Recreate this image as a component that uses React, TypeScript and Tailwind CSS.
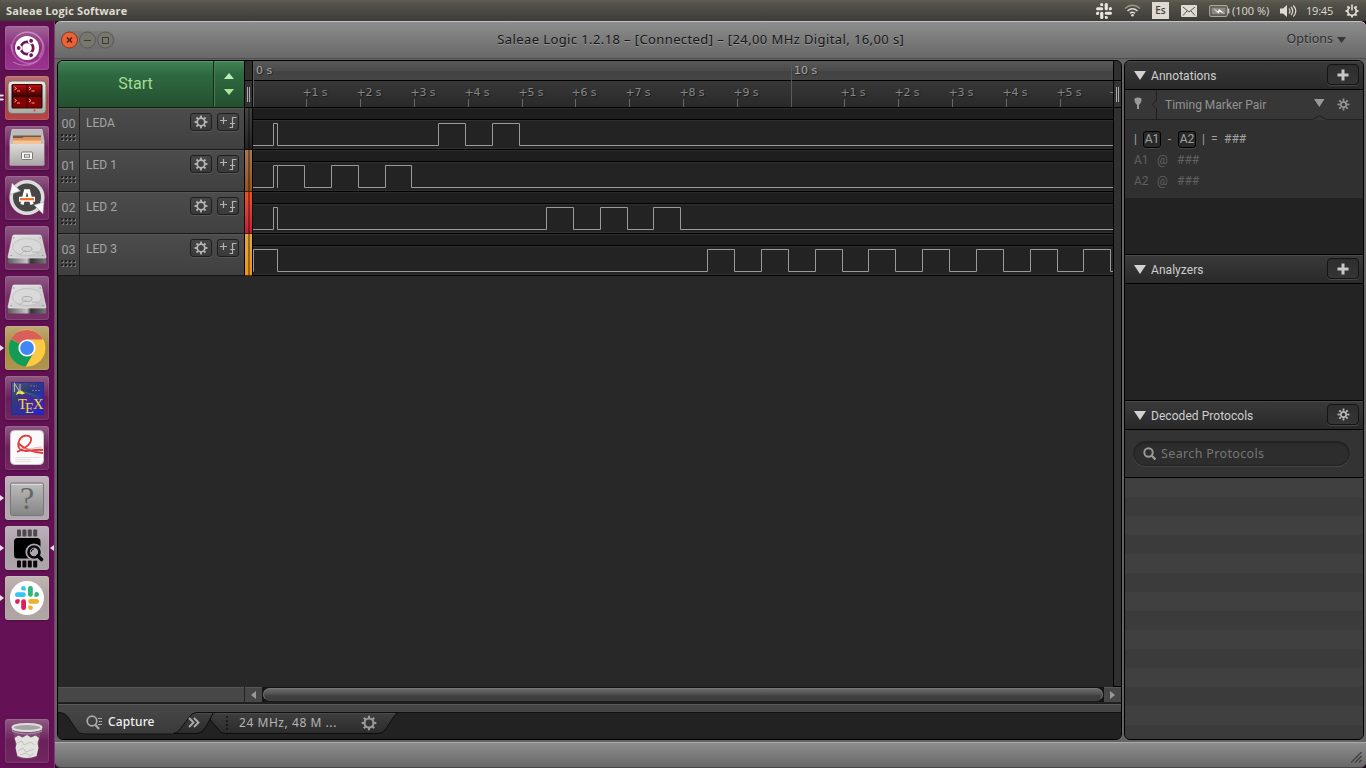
import React from "react";

type Pulse = [number, number];

const UI = "font-['Roboto',sans-serif]";
const LU = "font-['Noto_Sans',sans-serif]";

const channels: { id: string; name: string; strip: string; pulses: Pulse[] }[] = [
  { id: "00", name: "LEDA", strip: "from-[#434343] to-[#242424]", pulses: [[20, 24], [185, 212], [239, 266]] },
  { id: "01", name: "LED 1", strip: "from-[#a87850] to-[#9a5218]", pulses: [[20, 24], [24, 51], [78, 105], [132, 158]] },
  { id: "02", name: "LED 2", strip: "from-[#f1521f] to-[#c8183c]", pulses: [[20, 24], [293, 320], [347, 374], [400, 427]] },
  {
    id: "03",
    name: "LED 3",
    strip: "from-[#e0a83c] to-[#f29410]",
    pulses: [[0, 24], [454, 481], [508, 535], [562, 589], [615, 642], [669, 696], [723, 750], [777, 804], [830, 857]],
  },
];

const wave = (pulses: Pulse[]) =>
  "M0 37.5" + pulses.map(([a, b]) => `H${a + 0.5}V15.5H${b + 0.5}V37.5`).join("") + "H861";

const minor = [53, 107, 161, 215, 269, 322, 376, 430, 484, 591, 645, 699, 753, 807];

function Gear({ size = 14, color = "#b4b4b4", hole = 3.2, teeth = 1.9 }: { size?: number; color?: string; hole?: number; teeth?: number }) {
  return (
    <svg width={size} height={size} viewBox="0 0 14 14" className="shrink-0">
      <circle cx="7" cy="7" r={hole + 0.9} fill="none" stroke={color} strokeWidth="1.8" />
      {[0, 45, 90, 135, 180, 225, 270, 315].map((a) => (
        <rect key={a} x={7 - teeth / 2} y="0.6" width={teeth} height="2.4" fill={color} transform={`rotate(${a} 7 7)`} />
      ))}
    </svg>
  );
}

function UbuntuIcon() {
  return (
    <svg width="44" height="44" viewBox="0 0 44 44">
      <g fill="none" stroke="#e6b5dc" strokeOpacity=".4" strokeWidth="1.4">
        <path d="M8 26C3 10 22 0 33 10c8 8 4 17 1 21" />
        <path d="M12 10c12-10 31 2 26 17C34 38 20 43 8 36" />
        <path d="M6 18c0 14 14 24 26 17" />
      </g>
      <circle cx="22" cy="22" r="12" fill="#fff" />
      <circle cx="22" cy="22" r="6.2" fill="none" stroke="#6b1a5b" strokeWidth="2.8" />
      {[180, 300, 60].map((a) => (
        <g key={a} transform={`rotate(${a} 22 22)`}>
          <circle cx="30" cy="22" r="3" fill="#fff" />
          <circle cx="30.3" cy="22" r="1.9" fill="#6b1a5b" />
        </g>
      ))}
    </svg>
  );
}

function TerminatorIcon() {
  return (
    <svg width="44" height="44" viewBox="0 0 44 44">
      <defs>
        <linearGradient id="tm" x2="0" y2="1"><stop stopColor="#ecebe6" /><stop offset="1" stopColor="#aaa9a2" /></linearGradient>
        <linearGradient id="tr" x2="0" y2="1"><stop stopColor="#c30b0b" /><stop offset="1" stopColor="#4a0000" /></linearGradient>
      </defs>
      <rect x="3" y="5" width="38" height="32.5" rx="4" fill="url(#tm)" stroke="#77736e" />
      <rect x="6.5" y="8" width="31" height="24.5" rx="1.5" fill="#240c0c" />
      {[0, 1, 2, 3].map((i) => {
        const x = 8 + (i % 2) * 14.5, y = 9 + Math.floor(i / 2) * 12;
        return (
          <g key={i}>
            <rect x={x} y={y} width="13.5" height="10.500" fill={i < 2 ? "url(#tr)" : "#850000"} />
            <path d={`M${x + 1.5} ${y + 2}l2 1.5-2 1.5M${x + 4} ${y + 6}h3`} fill="none" stroke="#f5bcbc" strokeWidth=".9" />
          </g>
        );
      })}
      <circle cx="29.5" cy="34.5" r="1" fill="#f33" />
    </svg>
  );
}

function FilesIcon() {
  return (
    <svg width="44" height="44" viewBox="0 0 44 44">
      <defs>
        <linearGradient id="fg" x2="0" y2="1"><stop stopColor="#dddcda" /><stop offset="1" stopColor="#a8a7a6" /></linearGradient>
      </defs>
      <path d="M7 3.500h30l2 11.500v24H5V15z" fill="#bdbcba" stroke="#d9d8d6" strokeWidth=".7" />
      <path d="M8 9.500h28v9H8z" fill="#6b5a50" />
      <path d="M8 12h9l2-1h17v8H8z" fill="#e0945c" />
      <path d="M8 14.500h28v4H8z" fill="#f5c496" />
      <path d="M5 18h34v20.5q0 1-1 1H6q-1 0-1-1z" fill="url(#fg)" />
      <rect x="16.5" y="26" width="11" height="7.5" rx="1" fill="#f6f6f6" stroke="#777" />
      <rect x="19.5" y="28.7" width="5" height="2.5" fill="none" stroke="#777" />
    </svg>
  );
}

function UpdaterIcon() {
  return (
    <svg width="44" height="44" viewBox="0 0 44 44">
      <circle cx="22" cy="21.5" r="15.8" fill="#464646" stroke="#dcdcdc" strokeWidth="3.600" />
      <path d="M5 18.500L7 7l8.500 8zM39 26l-1 12-9-9z" fill="#f6f6f6" stroke="#999" strokeWidth=".5" />
      <path d="M17 28.500l3.500-13.500h3L27 28.500" fill="none" stroke="#fff" strokeWidth="3.300" />
      <path d="M14 23.200h16" stroke="#fff" strokeWidth="5" />
      <path d="M15 23.200h14" stroke="#f06a22" strokeWidth="2.200" />
    </svg>
  );
}

function DiskIcon() {
  return (
    <svg width="44" height="44" viewBox="0 0 44 44">
      <defs>
        <linearGradient id="dg" x2="1" y2="1"><stop stopColor="#e4e4e4" /><stop offset="1" stopColor="#c2c2c2" /></linearGradient>
        <linearGradient id="dk"><stop stopColor="#5c5c5c" /><stop offset=".5" stopColor="#c5c5c5" /><stop offset=".6" stopColor="#333" /><stop offset="1" stopColor="#777" /></linearGradient>
      </defs>
      <path d="M3 31h38v5.500q0 1-1 1H4q-1 0-1-1z" fill="url(#dk)" />
      <path d="M9 9h26q1 0 1.300 1L41 31q0 1-1 1H4q-1 0-1-1L7.700 10q.3-1 1.300-1z" fill="url(#dg)" stroke="#f3f3f3" strokeWidth=".6" />
      <ellipse cx="22" cy="21" rx="14.500" ry="8.500" fill="#d9d9d9" stroke="#bcbcbc" strokeWidth=".8" />
      <ellipse cx="22" cy="23" rx="5" ry="2.600" fill="#d4d4d4" stroke="#a2a2a2" strokeWidth=".8" />
      <path d="M14 29l7-5M27 26h7" stroke="#b2b2b2" strokeWidth=".9" />
      <path d="M8 12h1.500M34.500 12h1.500M5.500 29.500h1.500M37 29.500h1.500" stroke="#999" />
    </svg>
  );
}

function ChromeIcon() {
  return (
    <svg width="44" height="44" viewBox="0 0 44 44">
      <circle cx="22" cy="22" r="18.500" fill="#fcc934" />
      <path d="M22 22L6 12.700A18.500 18.500 0 0 1 38 13.500z" fill="#d9605a" />
      <path d="M5.900 12.900A18.500 18.500 0 0 0 21 40.500l7.500-13.700L22 22z" fill="#149c57" />
      <path d="M22 13.500h16A18.500 18.500 0 0 1 21 40.500l8.500-14.500z" fill="#fcc944" />
      <circle cx="22" cy="22" r="8.600" fill="#fff" />
      <circle cx="22" cy="22" r="6.900" fill="#4285f4" />
    </svg>
  );
}

function TexIcon() {
  return (
    <svg width="44" height="44" viewBox="0 0 44 44">
      <defs>
        <linearGradient id="tx" x2=".8" y2="1"><stop stopColor="#56606a" /><stop offset=".4" stopColor="#303978" /><stop offset="1" stopColor="#2525d0" /></linearGradient>
        <linearGradient id="beam"><stop stopColor="#b8d820" /><stop offset=".3" stopColor="#247a50" /><stop offset="1" stopColor="#2a2ac0" /></linearGradient>
      </defs>
      <rect x="6.500" y="6.500" width="32" height="32" fill="url(#tx)" stroke="#2a2a9d" />
      <path d="M13 20l9-3 16 6v10l-24 2z" fill="#5425a3" opacity=".6" />
      <path d="M16 15l22 5v5z" fill="url(#beam)" opacity=".8" />
      <path d="M11 19q1-5 5-4.500l4 3-3 1-3-1z" fill="#f0f030" />
      <path d="M9.500 16V7.500L15 16V8" fill="none" stroke="#b0b4b8" strokeWidth="1.100" />
      <path d="M25 10h7M27 14.500h8" fill="none" stroke="#7b85a4" strokeWidth=".8" strokeDasharray="2 1" />
      <g fill="#f4de21" className="font-['Liberation_Serif',serif]" fontSize="14.500">
        <text x="13" y="33">T</text><text x="20" y="37">E</text><text x="28" y="33">X</text>
      </g>
    </svg>
  );
}

function PdfIcon() {
  return (
    <svg width="44" height="44" viewBox="0 0 44 44">
      <rect x="5.500" y="4.500" width="33" height="34" rx="4" fill="#fafafa" stroke="#c9c5c9" />
      <path d="M38 24c-7-1-12 1-17 1-7 0-9-5-7-10 2-6 10-7 12-3 1 5-5 10-14 14M13 17c5 5 12 9 25 10" fill="none" stroke="#dd3c3c" strokeWidth="1.800" />
      <path d="M15 22c8 3 15-1 22-1" stroke="#f3b3b3" fill="none" />
      <path d="M10.500 31.500h24M10.500 33.500h15M10.500 35.500h15" stroke="#e0e0e0" />
    </svg>
  );
}

function UnknownIcon() {
  return (
    <svg width="44" height="44" viewBox="0 0 44 44">
      <defs><linearGradient id="qg" x2="0" y2="1"><stop stopColor="#bdbdbd" /><stop offset="1" stopColor="#858585" /></linearGradient></defs>
      <rect x="5.500" y="7" width="33" height="32.500" rx="2" fill="url(#qg)" stroke="#777" />
      <path d="M6.500 8.500h31" stroke="#ddd" />
      <text x="22" y="33" textAnchor="middle" fontSize="32" fill="#666" className="font-['Liberation_Serif',serif]">?</text>
    </svg>
  );
}

function LogicIcon() {
  return (
    <svg width="44" height="44" viewBox="0 0 44 44">
      {[0, 1, 2, 3].map((i) => (
        <g key={i}>
          <rect x={12 + i * 5.400} y="3.500" width="4" height="7" rx="1" fill="#4c484c" />
          <rect x={12 + i * 5.400} y="34.500" width="4" height="7" rx="1" fill="#080808" />
        </g>
      ))}
      <rect x="9" y="12" width="26.500" height="20.500" rx="3.500" fill="#000" />
      <circle cx="29" cy="26" r="8.600" fill="#aea6ae" />
      <path d="M31 28l6 6" stroke="#aea6ae" strokeWidth="6" />
      <circle cx="29" cy="26" r="5.500" fill="#aea6ae" stroke="#080808" strokeWidth="2.600" />
      <path d="M33 30l3.500 3.500" stroke="#080808" strokeWidth="3.600" strokeLinecap="round" />
      <path d="M26 26q0-3 3-3" stroke="#080808" fill="none" />
    </svg>
  );
}

function SlackMark({ mono = false }: { mono?: boolean }) {
  const c = mono ? ["#e9e6df", "#e9e6df", "#e9e6df", "#e9e6df"] : ["#36c5f0", "#2eb67d", "#ecb22e", "#e01e5a"];
  return (
    <>
      {[0, 90, 180, 270].map((a, i) => (
        <g key={a} transform={`rotate(${a} 12 12)`} fill={c[i]}>
          <rect x="0" y="6.200" width="10.800" height="4.800" rx="2.300" />
          <path d="M8.400 0a2.300 2.300 0 0 1 2.300 2.300v2.300H8.400a2.300 2.300 0 0 1 0-4.600z" />
        </g>
      ))}
    </>
  );
}

function SlackIcon() {
  return (
    <svg width="44" height="44" viewBox="0 0 44 44">
      <circle cx="22" cy="22" r="17" fill="#fff" />
      <svg x="10" y="10" width="24" height="24" viewBox="0 0 24 24"><SlackMark /></svg>
    </svg>
  );
}

function TrashIcon() {
  return (
    <svg width="44" height="44" viewBox="0 0 44 44">
      <path d="M8 9l4 29q9 4 20 0l4-29z" fill="#8f6289" fillOpacity=".5" />
      <path d="M9.500 19l4-2.500 4 2 4.500-2.500 4 2.500 4.500-2 3.500 2.500-1.500 5 1 5-2 8q-10 4-19 0l-2-8 1-4z" fill="#e2e2de" />
      <path d="M12 24l5-2 2 4 6-3 5 3M13 32l5-3 3 4 8-3M15 36l6-2 4 3 4-3" fill="none" stroke="#b9b9b4" strokeWidth=".8" />
      <ellipse cx="22" cy="8.500" rx="14.500" ry="3.500" fill="#a7a2a6" stroke="#dededc" strokeWidth="2" />
      <path d="M7.500 9.500v3q14 5 29 0v-3" fill="none" stroke="#b5b2b4" strokeOpacity=".7" />
    </svg>
  );
}

const tiles: { icon: React.ReactNode; bg: string; left?: number; right?: boolean }[] = [
  { icon: <UbuntuIcon />, bg: "bg-[linear-gradient(#a06496,#8d2a80_50%,#9c3491)]" },
  { icon: <TerminatorIcon />, bg: "bg-[linear-gradient(#bb7273,#ab3b42_50%,#b34648)]", left: 2 },
  { icon: <FilesIcon />, bg: "bg-[linear-gradient(#8f5a83,#6a2159_50%,#702660)]" },
  { icon: <UpdaterIcon />, bg: "bg-[linear-gradient(#8f5a83,#6a2159_50%,#702660)]" },
  { icon: <DiskIcon />, bg: "bg-[linear-gradient(#8f5a83,#742c65_50%,#753266)]" },
  { icon: <DiskIcon />, bg: "bg-[linear-gradient(#8f5a83,#742c65_50%,#753266)]" },
  { icon: <ChromeIcon />, bg: "bg-[linear-gradient(#bfa97a,#a78b3f_50%,#ae9550)]", left: 1 },
  { icon: <TexIcon />, bg: "bg-[linear-gradient(#8f5a83,#692058_50%,#702660)]" },
  { icon: <PdfIcon />, bg: "bg-[linear-gradient(#8f5a83,#6a2159_50%,#702660)]" },
  { icon: <UnknownIcon />, bg: "bg-[linear-gradient(#c2b4c0,#b0a5ae_50%,#b1a8b0)]", left: 1 },
  { icon: <LogicIcon />, bg: "bg-[linear-gradient(#bdb0bb,#aaa0a8_50%,#ada4ac)]", left: 1, right: true },
  { icon: <SlackIcon />, bg: "bg-[linear-gradient(#c1b6b3,#aca19e_50%,#b0a6a3)]", left: 1 },
];

function Tile({ t }: { t: (typeof tiles)[number] }) {
  return (
    <div className={`relative h-11 w-11 shrink-0 rounded-[3px] shadow-[inset_0_0_0_1px_rgba(255,255,255,.1),0_1px_2px_rgba(0,0,0,.25)] ${t.bg}`}>
      {t.icon}
      {t.left === 1 && <svg className="absolute -left-[5px] top-[18px]" width="4" height="8"><path d="M0 1l4 3-4 3z" fill="#e6dfe4" /></svg>}
      {t.left === 2 && <svg className="absolute -left-[5px] top-[18px]" width="4" height="8"><path d="M0 .5h3l1 1-1 1H0zM0 4.500h3l1 1-1 1H0z" fill="#e6dfe4" /></svg>}
      {t.right && <svg className="absolute -right-[5px] top-[18px]" width="4" height="8"><path d="M4 1L0 4l4 3z" fill="#e6dfe4" /></svg>}
    </div>
  );
}

function Launcher() {
  return (
    <div className="flex w-[55px] shrink-0 flex-col gap-1.5 border-r border-[#7e3a70] bg-[linear-gradient(#5d104e,#661157)] pb-[5px] pl-[5px] pt-[5px]">
      {tiles.map((t, i) => <Tile key={i} t={t} />)}
      <div className="flex-1" />
      <Tile t={{ icon: <TrashIcon />, bg: "bg-[linear-gradient(#8f5a83,#6a2159_50%,#702660)]" }} />
    </div>
  );
}

function TopBar() {
  return (
    <div className="flex h-[21px] shrink-0 items-center bg-[linear-gradient(#605e53,#55534b_15%,#3d3c37)] pl-1.5 pr-[7px] text-[#dfdbd2]">
      <span className="pt-px font-['Open_Sans',sans-serif] text-[11px] font-bold leading-5 tracking-[0.1px]">Saleae Logic Software</span>
      <div className="flex-1" />
      <svg width="16" height="16" viewBox="0 0 24 24" className="mr-3"><SlackMark mono /></svg>
      <svg width="17" height="13" viewBox="0 0 17 13" className="mr-[11px]" fill="none" strokeWidth="1.500">
        <path d="M1 4.500Q8.500-2 16 4.500" stroke="#9b988f" /><path d="M3.500 7Q8.500 2.500 13.500 7" stroke="#dfdbd2" />
        <path d="M6 9.400Q8.500 7.200 11 9.400" stroke="#dfdbd2" /><circle cx="8.500" cy="11.300" r="1.300" fill="#dfdbd2" />
      </svg>
      <span className="mr-3 flex h-[17px] w-[17px] items-center justify-center bg-[#dfdbd2] font-['Open_Sans',sans-serif] text-[10px] font-semibold text-[#45433d]">Es</span>
      <svg width="16" height="12" viewBox="0 0 16 12" className="mr-3">
        <rect width="16" height="12" rx="1" fill="#dfdbd2" /><path d="M2 2l6 5 6-5M2 10.500l4.500-5M14 10.500l-4.500-5" fill="none" stroke="#55534b" />
      </svg>
      <svg width="21" height="12" viewBox="0 0 21 12" className="mr-[2px]">
        <rect x=".7" y=".7" width="17.600" height="10.600" rx="1.500" fill="none" stroke="#aaa79e" strokeWidth="1.200" />
        <rect x="2.500" y="2.500" width="14" height="7" fill="#8b8980" /><path d="M19.500 3.500v5" stroke="#c9c5bc" strokeWidth="1.800" />
        <path d="M4 3l5 3.500 1-2.500 6 5-5.500-2.500-1 2z" fill="#fff" />
      </svg>
      <span className="w-[38px] whitespace-nowrap pt-px font-['Open_Sans',sans-serif] text-[11px]">(100 %)</span>
      <svg width="17" height="14" viewBox="0 0 17 14" className="ml-2.5 mr-[9px]">
        <path d="M0 4.500h3L7 1v12L3 9.500H0z" fill="#dfdbd2" />
        <path d="M9 4.500q2 2.500 0 5M11 3q3.500 4 0 8M13.300 1.500q5 5.500 0 11" fill="none" stroke="#dfdbd2" strokeWidth="1.200" />
      </svg>
      <span className="w-[28px] whitespace-nowrap pt-px font-['Open_Sans',sans-serif] text-[11px] tracking-[-0.02em]">19:45</span>
      <svg width="14" height="14" viewBox="0 0 14 14" className="ml-[11px]" stroke="#dfdbd2" fill="none">
        <path d="M5 3.200a4.300 4.300 0 1 0 4 0" strokeWidth="1.800" /><path d="M7 .5v6" strokeWidth="1.600" />
        {[45, 90, 135, 180, 225, 270, 315].map((a) => <path key={a} d="M7 .5v2" strokeWidth="2" transform={`rotate(${a} 7 7)`} />)}
      </svg>
    </div>
  );
}

function TitleBar() {
  return (
    <div className="flex h-[38px] shrink-0 items-center rounded-t-md border-b border-t border-b-[#4e4e4e] border-t-[#c2c2c2] bg-[linear-gradient(#8d8d8d,#686868)] pl-[5px] pr-5">
      <svg width="56" height="20" viewBox="0 0 56 20">
        <rect x="1" y="1" width="54" height="18" rx="9" fill="#666" opacity=".3" />
        <circle cx="9.500" cy="10" r="8" fill="#ea6237" stroke="#8b3a20" /><path d="M7 7.500l5 5M12 7.500l-5 5" stroke="#4a1d10" strokeWidth="1.500" />
        <circle cx="27.500" cy="10" r="8" fill="#77766f" stroke="#5b5a56" /><path d="M24 10.500h7" stroke="#3d3c38" />
        <circle cx="45.500" cy="10" r="8" fill="#77766f" stroke="#5b5a56" /><rect x="42.500" y="7.500" width="6" height="6" fill="none" stroke="#3d3c38" />
      </svg>
      <div className={`flex flex-1 justify-center pr-[1px] text-[13px] text-[#161616] [text-shadow:0_1px_0_rgba(255,255,255,.25)] ${LU}`}>
        <span className="whitespace-nowrap tracking-[0.395px]">Saleae Logic 1.2.18 – [Connected] – [24,00 MHz Digital, 16,00 s]</span>
      </div>
      <span className={`-mt-0.5 text-[12.500px] text-[#2d2d2d] [text-shadow:0_1px_0_rgba(255,255,255,.2)] ${LU}`}>Options</span>
      <svg width="9" height="6" className="ml-1"><path d="M0 0h9L4.500 6z" fill="#383838" /></svg>
    </div>
  );
}

const smallBtn = "flex items-center justify-center rounded-[3px] border border-[#1e1e1e] bg-[linear-gradient(#464646,#3a3a3a)] shadow-[0_1px_0_#565656]";

function ChannelRow({ id, name }: { id: string; name: string }) {
  return (
    <div className="flex h-[42px] border-b border-[#181818] bg-[linear-gradient(#4c4c4c,#404040)] shadow-[inset_0_1px_0_#575757]">
      <div className="flex w-[22px] shrink-0 flex-col items-center border-r border-[#222] pt-[7px]">
        <span className={`text-[12.500px] leading-[17px] text-[#a0a0a0] ${UI}`}>{id}</span>
        <svg width="16" height="8" className="mt-[2px]">
          {[0, 1, 2, 3].map((i) => [0, 1].map((j) => (
            <g key={`${i}${j}`}><rect x={i * 4 + 1} y={j * 4 + 1} width="2" height="2" fill="#777" /><rect x={i * 4} y={j * 4} width="2" height="2" fill="#202020" /></g>
          )))}
        </svg>
      </div>
      <span className={`flex-1 pl-[6px] pt-[7px] text-[12px] leading-[17px] text-[#a5a5a5] ${UI}`}>{name}</span>
      <div className="flex gap-[5px] pr-[5px] pt-[5px]">
        <div className={`h-[18px] w-[22px] ${smallBtn}`}><Gear size={14} hole={2.900} /></div>
        <div className={`h-[18px] w-[22px] ${smallBtn}`}>
          <svg width="18" height="14" viewBox="0 0 18 14" className="shrink-0" fill="none" stroke="#b4b4b4">
            <path d="M1 5.500h7M4.500 2v7M17.500 2.500h-4v10H10.500M11 8.500h5" strokeWidth="1.200" />
          </svg>
        </div>
      </div>
    </div>
  );
}

function Ruler() {
  return (
    <svg width="860" height="47" className="block">
      <defs>
        <linearGradient id="r1" x2="0" y2="1"><stop stopColor="#585858" /><stop offset=".5" stopColor="#4b4b4b" /><stop offset=".52" stopColor="#434343" /><stop offset="1" stopColor="#454545" /></linearGradient>
        <linearGradient id="r2" x2="0" y2="1"><stop stopColor="#383838" /><stop offset="1" stopColor="#292929" /></linearGradient>
      </defs>
      <rect width="860" height="19" fill="url(#r1)" />
      <rect y="19" width="860" height="1" fill="#000" />
      <rect y="20" width="860" height="26" fill="url(#r2)" />
      <rect y="46" width="860" height="1" fill="#000" />
      <path d="M.5 0V46" stroke="#5d5d5d" /><path d="M538.500 5V46" stroke="#5a5a5a" />
      <g fontSize="11" className="font-['DejaVu_Sans',sans-serif] [text-shadow:1px_1px_1px_rgba(0,0,0,.5)]">
        <text x="3" y="13" fill="#a8a8a8">0 s</text>
        <text x="541" y="13" fill="#a8a8a8">10 s</text>
        {minor.map((x, i) => (
          <g key={x}>
            <path d={`M${x + 0.5} 38v8`} stroke="#686868" />
            <text x={x - 3.500} y="35" fill="#868686" textLength="25">{`+${(i % 9) + 1} s`}</text>
          </g>
        ))}
        <path d="M857 31.500h3" stroke="#7d7d7d" />
      </g>
    </svg>
  );
}

function Waves({ pulses }: { pulses: Pulse[] }) {
  return (
    <svg width="860" height="42" className="block">
      <rect width="860" height="42" fill="#232323" />
      <rect width="860" height="11" fill="#1e1e1e" />
      <rect width="860" height="1" fill="#2b2b2b" />
      <rect y="11" width="860" height="1" fill="#000" />
      <rect y="12" width="860" height="1" fill="#303030" />
      <rect y="40" width="860" height="1" fill="#303030" />
      <rect y="41" width="860" height="1" fill="#000" />
      <path d={wave(pulses)} fill="none" stroke="#9a9a9a" />
    </svg>
  );
}

function Grip() {
  return <div className="flex gap-px"><i className="h-[15px] w-px bg-[#aaa]" /><i className="h-[15px] w-px bg-[#aaa]" /></div>;
}

function BottomTabs() {
  return (
    <div className="grid h-[36px] border-t border-[#1c1c1c] bg-[#222]">
      <svg width="1063" height="35" className="col-start-1 row-start-1 block">
        <defs>
          <linearGradient id="tab" x2="0" y2="1"><stop stopColor="#3f3f3f" /><stop offset="1" stopColor="#2b2b2b" /></linearGradient>
          <linearGradient id="cap" x2="0" y2="1"><stop stopColor="#454545" /><stop offset="1" stopColor="#3a3a3a" /></linearGradient>
        </defs>
        <rect width="1063" height="8" fill="#454545" /><path d="M0 .5H1063" stroke="#5a5a5a" /><path d="M338 8.500H1063" stroke="#111" />
        <path d="M0 8.500q8 0 11 6l8 12q2 3.500 7 3.500h88q5 0 8-4l9-12q3-5.500 9-5.500V7H0z" fill="url(#cap)" />
        <path d="M0 8.500q8 0 11 6l8 12q2 3.500 7 3.500h88" fill="none" stroke="#111" />
        <path d="M115 29.500q4 0 7-4l9-12q3-5 9-5H156L147 24q-3 5.500-8 5.500z" fill="url(#tab)" stroke="#0d0d0d" />
        <path d="M155.500 8.500H340q-2 1-4 4l-8 12q-3 5-8 5H167q-4 0-6.500-4L152 15z" fill="url(#tab)" stroke="#0d0d0d" />
        <path d="M157 9.500h179M138 9.500h16" stroke="#555" opacity=".6" />
        <g stroke="#aaa" fill="none">
          <circle cx="34" cy="17" r="4.800" strokeWidth="1.700" /><path d="M37.500 21l3.500 4" strokeWidth="2.200" /><path d="M40 14.500h4M41 17.500h3M40 20.500h4" />
          <path d="M131 14l4.500 4.500L131 23M136 14l4.500 4.500L136 23" strokeWidth="1.900" />
        </g>
        <path d="M169 12v16" stroke="#1b1b1b" strokeWidth="2" strokeDasharray="2 2" />
      </svg>
      <div className={`col-start-1 row-start-1 flex pl-[50px] text-[12px] leading-[17px] ${LU}`}>
        <span className="w-[131px] pt-[9px] font-medium tracking-[0.01em] text-[#f0f0f0]">Capture</span>
        <span className="w-[122px] pt-[10px] tracking-[0.55px] text-[#b4b4b4]">24 MHz, 48 M ...</span>
        <span className="pt-[11px]"><Gear size={16} color="#999" hole={3} /></span>
      </div>
    </div>
  );
}

function MainPanel() {
  return (
    <div className="flex w-[1065px] shrink-0 flex-col overflow-hidden rounded-md border border-black bg-[#282828]">
      <div className="flex h-[626px] shrink-0">
        <div className="w-[186px] shrink-0">
          <div className="flex h-[47px] border-b border-[#10200f] text-[#a3dd93]">
            <div className={`flex w-[156px] items-center justify-center border-r border-[#132c1a] bg-[linear-gradient(#438355,#2e6941_30%,#24502f)] text-[16px] shadow-[inset_0_1px_0_#5a9a6a] ${UI}`}>Start</div>
            <div className="flex flex-1 flex-col items-center justify-center gap-[10px] border-l border-[#4b7c58] bg-[linear-gradient(#438355,#2e6941_30%,#24502f)] pr-px shadow-[inset_0_1px_0_#5a9a6a]">
              <svg width="10" height="6"><path d="M0 6h10L5 0z" fill="#bfeeb2" /></svg>
              <svg width="10" height="6"><path d="M0 0h10L5 6z" fill="#a8e69a" /></svg>
            </div>
          </div>
          {channels.map((c) => <ChannelRow key={c.id} id={c.id} name={c.name} />)}
        </div>
        <div className="flex w-[9px] shrink-0 flex-col bg-[#282828]">
          <div className="h-[19px] border-x border-black bg-[#303030]" />
          <div className="flex h-7 items-center justify-center border border-black bg-[#333]"><Grip /></div>
          {channels.map((c) => (
            <div key={c.id} className="flex h-[42px] border-x border-black">
              <div className={`flex flex-1 justify-center border-b border-black/70 bg-linear-to-b ${c.strip}`}><i className="w-0.5 bg-black/35" /></div>
            </div>
          ))}
        </div>
        <div className="w-[860px] shrink-0 overflow-hidden">
          <Ruler />
          {channels.map((c) => <Waves key={c.id} pulses={c.pulses} />)}
        </div>
        <div className="flex flex-1 flex-col border-b border-l border-black bg-[#303030]">
          <div className="h-[19px]" />
          <div className="flex h-7 items-center justify-center border-b border-t border-black bg-[#343434]"><Grip /></div>
        </div>
      </div>
      <div className="flex h-4 shrink-0 border-b border-[#222] bg-[#474747] shadow-[inset_0_1px_0_#555]">
        <div className="w-[187px] border-r border-[#222]" />
        <div className="flex w-[17px] items-center justify-center"><svg width="5" height="8"><path d="M5 0v8L0 4z" fill="#999" /></svg></div>
        <div className="w-[842px] bg-[#151515] p-px"><div className="h-[13px] rounded-full border border-[#777] border-b-[#444] bg-[linear-gradient(#6b6b6b,#4d4d4d_50%,#424242_55%,#3b3b3b)]" /></div>
        <div className="flex flex-1 items-center justify-center"><svg width="5" height="8"><path d="M0 0v8l5-4z" fill="#999" /></svg></div>
      </div>
      <BottomTabs />
    </div>
  );
}

function SectionHeader({ title, icon, first = false }: { title: string; icon: React.ReactNode; first?: boolean }) {
  return (
    <div className={`flex shrink-0 items-center border-b border-black bg-[linear-gradient(#3a3a3a,#292929)] pl-[9px] pr-1 shadow-[inset_0_1px_0_#4a4a4a] ${first ? "h-[29px]" : "h-[30px] border-t"}`}>
      <svg width="12" height="9" className="mr-[5px]"><path d="M0 0h12L6 9z" fill="#d2d2d2" /></svg>
      <span className={`flex-1 pt-[2px] text-[12px] tracking-[0.05px] text-[#cfcfcf] ${UI}`}>{title}</span>
      <div className="-mt-px flex h-[21px] w-8 items-center justify-center rounded border border-[#141414] bg-[linear-gradient(#2e2e2e,#353535)] shadow-[0_1px_0_#474747]">{icon}</div>
    </div>
  );
}

const plus = <svg width="12" height="12"><path d="M4.500 .5h3v4h4v3h-4v4h-3v-4h-4v-3h4z" fill="#c8c8c8" /></svg>;

function SidePanel() {
  return (
    <div className={`flex w-[240px] shrink-0 flex-col overflow-hidden rounded-md border border-black bg-[#232323] ${UI}`}>
      <SectionHeader title="Annotations" icon={plus} first />
      <div className="grid h-[30px] shrink-0 bg-[#373737]">
        <svg width="238" height="30" className="col-start-1 row-start-1">
          <path d="M0 29.500H187.500l7-4 7 4H238" fill="none" stroke="#202020" />
          <path d="M31.500 0V10l-4 4.500 4 4.500V29" fill="none" stroke="#202020" />
          <path d="M9.500 8.500q3.500-2 7 0 .5 3.500-2.500 6.500V19h-2v-4q-3-3-2.500-6.500z" fill="#999" />
          <path d="M189 9h10.500l-5.200 8z" fill="#999" />
        </svg>
        <div className="col-start-1 row-start-1 flex items-center">
          <span className="flex-1 pl-10 text-[12px] text-[#939393]">Timing Marker Pair</span>
          <span className="mb-px mr-[13px]"><Gear size={13} color="#999" hole={2} /></span>
        </div>
      </div>
      <div className="h-[78px] shrink-0 bg-[#303030] pl-[9px] pt-[9px] text-[12px] leading-[21px] text-[#a3a3a3]">
        <div className="flex h-[21px] items-center">
          <span className="w-[9px]">|</span>
          <span className="flex h-[17px] w-[18px] items-center justify-center rounded-[3px] border border-black bg-[#292929] shadow-[0_1px_0_#444]">A1</span>
          <span className="w-[17px] text-center">-</span>
          <span className="flex h-[17px] w-[18px] items-center justify-center rounded-[3px] border border-black bg-[#292929] shadow-[0_1px_0_#444]">A2</span>
          <span className="w-[15px] pl-[6px]">|</span><span className="w-[13px]">=</span><span>###</span>
        </div>
        {["A1", "A2"].map((a) => (
          <div key={a} className="flex h-[21px] text-[#606060]"><span className="w-[23px]">{a}</span><span className="w-5">@</span><span>###</span></div>
        ))}
      </div>
      <div className="h-14 shrink-0 bg-[#222]" />
      <SectionHeader title="Analyzers" icon={plus} />
      <div className="h-[116px] shrink-0 bg-[#232323]" />
      <SectionHeader title="Decoded Protocols" icon={<Gear size={13} color="#bbb" hole={2} />} />
      <div className="h-[47px] shrink-0 bg-[#333] pl-2 pr-[13px] pt-[11px]">
        <div className={`flex h-[25px] items-center rounded-full border border-[#222] bg-[#2d2d2d] pl-[9px] text-[12.500px] text-[#777] shadow-[0_1px_0_#444,inset_0_1px_2px_#202020] ${LU}`}>
          <svg width="13" height="13" className="mr-[5px]" fill="none" stroke="#999"><circle cx="5.500" cy="5.500" r="4.200" strokeWidth="2" /><path d="M8.500 8.500l4 4" strokeWidth="2.400" /></svg>
          <span className="pt-px tracking-[0.36px]">Search Protocols</span>
        </div>
      </div>
      <div className="flex-1 border-t border-black bg-[repeating-linear-gradient(#404040_0px,#404040_19px,#3b3b3b_19px,#3b3b3b_38px)]" />
    </div>
  );
}

export default function App() {
  return (
    <div className="flex h-screen w-full flex-col overflow-hidden bg-[#1c0b19]">
      <TopBar />
      <div className="flex min-h-0 flex-1">
        <Launcher />
        <div className="flex min-w-0 flex-1 flex-col rounded-md bg-[#646464]">
          <TitleBar />
          <div className="flex h-[683px] shrink-0 gap-[2px] pb-[2px] pl-[2px] pt-px">
            <MainPanel />
            <SidePanel />
          </div>
          <div className="flex flex-1 items-end justify-end rounded-b-md border-b border-t border-b-[#444] border-t-[#aaa] bg-[linear-gradient(#8d8d8d,#686868)] pb-1 pr-1">
            <svg width="11" height="11"><path d="M0 10.500L10.500 0M4 10.500L10.500 4M8 10.500l2.500-2.500" stroke="#3c3c3c" strokeWidth="1.200" /></svg>
          </div>
        </div>
      </div>
    </div>
  );
}
